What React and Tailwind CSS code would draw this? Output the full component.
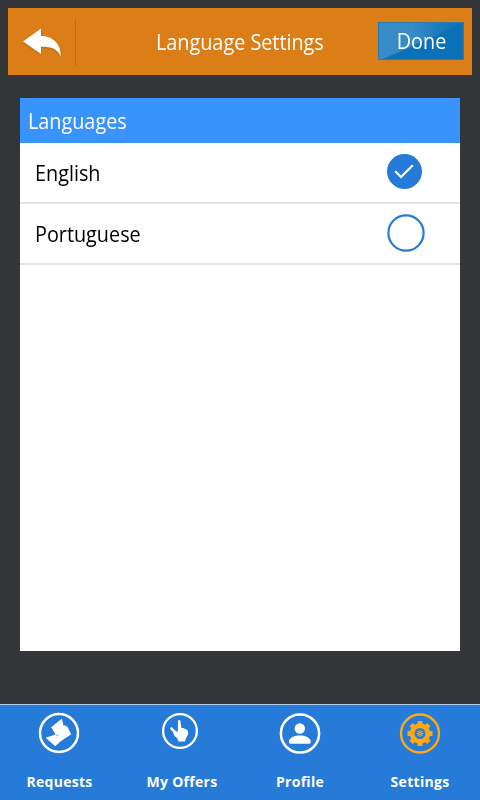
const languages = [
  { name: 'English', selected: true },
  { name: 'Portuguese', selected: false },
]

const weave = {
  backgroundImage:
    'repeating-linear-gradient(0deg, rgba(255,255,255,0.01) 0 1px, transparent 1px 3px), repeating-linear-gradient(90deg, rgba(0,0,0,0.03) 0 1px, transparent 1px 4px)',
}

function BackIcon() {
  return (
    <svg width="40" height="32" viewBox="0 0 40 32" className="drop-shadow-[0_1px_1px_rgba(120,60,0,0.35)]">
      <path d="M1 15.5 19 2.5V10C30 10 39 17 38.8 30.5C35.5 23 30 20.7 19 20.7V28Z" fill="#fff" />
    </svg>
  )
}

function CheckMark({ selected }) {
  if (selected) {
    return (
      <svg width="38" height="38" viewBox="0 0 38 38">
        <circle cx="17.5" cy="17.5" r="17.5" fill="#267bd8" />
        <path d="M8.2 17.3 14 23 25.8 11.2" fill="none" stroke="#fff" strokeWidth="2.2" />
      </svg>
    )
  }
  return (
    <svg width="38" height="38" viewBox="0 0 38 38" className="overflow-visible">
      <circle cx="19" cy="18" r="17.6" fill="none" stroke="#267bd8" strokeWidth="2.2" />
    </svg>
  )
}

function RequestsIcon() {
  return (
    <svg width="42" height="42" viewBox="0 0 42 42" fill="#fff">
      <circle cx="21" cy="21" r="19" fill="none" stroke="#fff" strokeWidth="2.5" />
      <path d="M13.2 15.2 23.8 6.8 25.7 14 27 13 28.2 14.6 29.3 14.2 33.2 22.2 22.8 29.2 17.2 34.2 7.6 25.7 17.5 22.5Z" />
      <path d="M18.4 23 20.2 23.8" fill="none" stroke="#267bd8" strokeWidth="0.7" />
    </svg>
  )
}

function OffersIcon() {
  return (
    <svg width="38" height="38" viewBox="0 0 38 38" fill="#fff">
      <circle cx="19" cy="19" r="16.9" fill="none" stroke="#fff" strokeWidth="2.3" />
      <path d="M17 9.2Q17 7.9 18.1 7.9Q19.3 7.9 19.5 9.2L20.4 16 22.5 16 23.3 16.8 25 17 25.6 17.8Q27.3 18 27.1 20.5L26.6 23.5 24.9 26.2 23.9 29.6H17.3L16.4 26.5 13.3 23.5 11.8 19.7 9.2 16.9Q9 15 10.8 15.3L14.5 18.7 16.8 20Z" />
    </svg>
  )
}

function ProfileIcon() {
  return (
    <svg width="42" height="42" viewBox="0 0 42 42" fill="#fff">
      <circle cx="21" cy="21.5" r="19.1" fill="none" stroke="#fff" strokeWidth="2.5" />
      <circle cx="20.8" cy="16.5" r="5.2" />
      <path d="M9.8 30C9.8 25.5 16 23.6 20.8 23.6S31.8 25.5 31.8 30Q31.8 31.8 30 31.8H11.6Q9.8 31.8 9.8 30Z" />
    </svg>
  )
}

function SettingsIcon() {
  const angles = [0, 45, 90, 135]
  return (
    <svg width="42" height="42" viewBox="0 0 42 42" fill="#ffa80f">
      <circle cx="21" cy="21.5" r="19" fill="none" stroke="#ffa80f" strokeWidth="2.3" />
      <circle cx="21" cy="21.5" r="7.9" fill="none" stroke="#ffa80f" strokeWidth="4.8" />
      {angles.map(a => (
        <g key={a} transform={`rotate(${a} 21 21.5)`}>
          <path d="M18.6 9H23.4V13H18.6ZM18.6 30H23.4V34H18.6Z" />
          <path d="M20.5 18.1H21.5V24.9H20.5Z" />
        </g>
      ))}
      <circle cx="21" cy="21.5" r="0.7" fill="#267bd8" />
    </svg>
  )
}

const tabs = [
  { label: 'Requests', icon: RequestsIcon, box: 'w-[119px]', iconBox: 'mt-[7px] mr-px' },
  { label: 'My Offers', icon: OffersIcon, box: 'w-[125px] pl-px', iconBox: 'mt-[7px] mr-1' },
  { label: 'Profile', icon: ProfileIcon, box: 'w-28', iconBox: 'mt-[7px]' },
  { label: 'Settings', icon: SettingsIcon, box: 'w-[124px] pl-1', iconBox: 'mt-[7px] mr-px' },
]

export default function App() {
  return (
    <div
      className="flex h-[800px] w-[480px] flex-col overflow-hidden bg-[#343538] font-['Open_Sans','Noto_Sans',sans-serif]"
      style={weave}
    >
      <header className="mx-2 mt-2 flex h-[67px] shrink-0 items-center bg-[#dc7e18] text-white">
        <button className="mt-0.5 flex h-[47px] w-[68px] items-center border-r border-[#bd6b14] pb-0.5 pl-3.5">
          <BackIcon />
        </button>
        <h1 className="flex-1 pb-0.5 pl-20 text-[22px] leading-[30px] whitespace-nowrap">
          <span className="inline-block origin-left scale-x-[0.9]">Language Settings</span>
        </h1>
        <button className="mr-2 mb-0.5 flex h-[38px] w-[86px] items-center justify-center border border-[#2b7db0] bg-[linear-gradient(156deg,transparent_50%,#0b71b7_53%),linear-gradient(to_right,#378bc6_40%,#0b71b7_95%)] pb-0.5 pl-0.5 text-[22px] leading-[30px]">
          <span className="inline-block scale-x-[0.9]">Done</span>
        </button>
      </header>

      <main className="mx-5 mt-[23px] flex h-[553px] shrink-0 flex-col bg-white">
        <h2 className="flex h-[45px] items-center bg-[#3893fc] pb-0.5 pl-2 text-[22px] leading-[30px] text-white">
          <span className="inline-block origin-left scale-x-[0.9]">Languages</span>
        </h2>
        <ul>
          {languages.map(l => (
            <li key={l.name} className="flex h-[61px] items-center justify-between border-b-2 border-[#e5e5e5] pr-[35px] pl-[15px] text-[22px] leading-[30px] text-black">
              <span className="mb-0.5 inline-block origin-left scale-x-[0.9]">{l.name}</span>
              <CheckMark selected={l.selected} />
            </li>
          ))}
        </ul>
      </main>

      <nav className="mt-auto flex h-24 shrink-0 border-t border-[#b4d0ef] bg-[#267bd8] text-white">
        {tabs.map(t => (
          <div key={t.label} className={`flex flex-col items-center ${t.box}`}>
            <div className={`flex h-[60px] items-start ${t.iconBox}`}>
              <t.icon />
            </div>
            <span className="text-sm leading-5 font-bold tracking-[0.3px] whitespace-nowrap">{t.label}</span>
          </div>
        ))}
      </nav>
    </div>
  )
}
